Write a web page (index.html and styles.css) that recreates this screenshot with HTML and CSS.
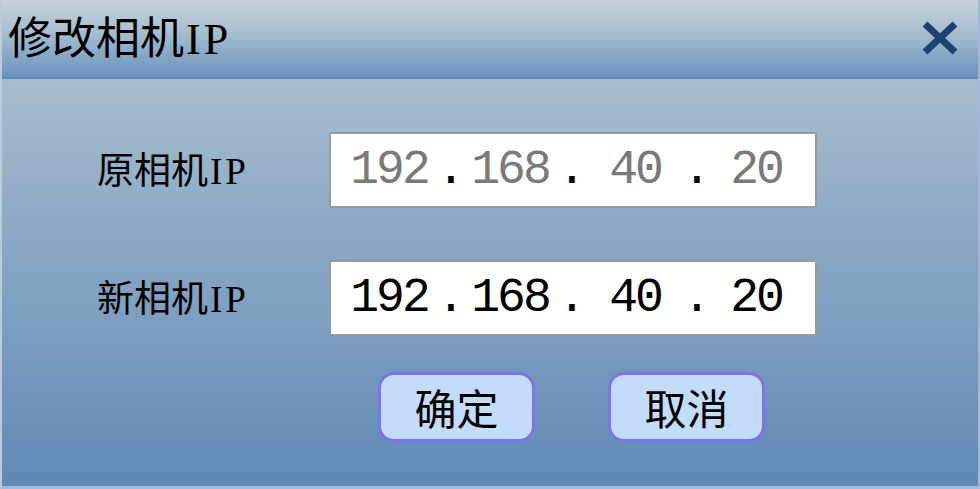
FILE: index.html
```html
<!DOCTYPE html>
<html lang="zh">
<head>
<meta charset="utf-8">
<title>修改相机IP</title>
<link rel="stylesheet" href="styles.css">
</head>
<body>
<div class="dialog">
  <div class="titlebar">
    <span class="title">修改相机<span class="latin">IP</span></span>
    <span class="close" aria-label="关闭">
      <svg width="40" height="36" viewBox="0 0 40 36">
        <path d="M5 4 L35 32 M35 4 L5 32" stroke="#1d436e" stroke-width="7" stroke-linecap="butt" fill="none"/>
      </svg>
    </span>
  </div>
  <div class="body">
    <div class="row">
      <span class="label">原相机<span class="latin">IP</span></span>
      <div class="ipbox disabled">
        <span class="oct">192</span><span class="dot">.</span><span class="oct">168</span><span class="dot">.</span><span class="oct">40</span><span class="dot">.</span><span class="oct">20</span>
      </div>
    </div>
    <div class="row">
      <span class="label">新相机<span class="latin">IP</span></span>
      <div class="ipbox">
        <span class="oct">192</span><span class="dot">.</span><span class="oct">168</span><span class="dot">.</span><span class="oct">40</span><span class="dot">.</span><span class="oct">20</span>
      </div>
    </div>
    <div class="buttons">
      <button class="btn">确定</button>
      <button class="btn">取消</button>
    </div>
  </div>
</div>
</body>
</html>
```

FILE: styles.css
```css
html, body {
  margin: 0;
  padding: 0;
  width: 980px;
  height: 489px;
  overflow: hidden;
}

body {
  font-family: "Noto Sans CJK SC", "Liberation Sans", sans-serif;
  color: #000;
}

.dialog {
  width: 980px;
  height: 489px;
  box-sizing: border-box;
  display: flex;
  flex-direction: column;
  border-left: 2px solid #b9ccd8;
  border-right: 2px solid #9fb9d6;
  border-bottom: 3px solid #a4bcd8;
  background: linear-gradient(to bottom, #b4c7d1 0%, #8eabc6 45%, #6189b6 100%);
}

.titlebar {
  height: 77px;
  flex: none;
  display: flex;
  align-items: center;
  justify-content: space-between;
  padding: 0 18px 0 6px;
  background: linear-gradient(to bottom, #c6d2d8 0%, #a9bfd0 40%, #6a92bd 100%);
  border-bottom: 2px solid #5f88b3;
}

.title {
  font-size: 44px;
  line-height: 1;
  margin-top: -2px;
}

.latin {
  font-family: "Liberation Serif", serif;
  letter-spacing: 3px;
  margin-left: 2px;
}

.close {
  display: flex;
  margin-top: -2px;
}

.body {
  flex: 1;
  display: flex;
  flex-direction: column;
  padding: 53px 0 0 95px;
}

.row {
  display: flex;
  align-items: center;
  margin-bottom: 52px;
}

.row + .row {
  margin-bottom: 36px;
}

.label {
  width: 232px;
  font-size: 37px;
  line-height: 1;
}

.ipbox {
  width: 488px;
  height: 76px;
  box-sizing: border-box;
  background: #fff;
  border: 2px solid #9a9a9a;
  border-radius: 2px;
  display: flex;
  align-items: center;
  padding-left: 19px;
  font-family: "Liberation Mono", "DejaVu Sans Mono", monospace;
  font-size: 48px;
  letter-spacing: -3px;
  color: #000;
}

.ipbox.disabled {
  color: #7a7a7a;
}

.oct {
  width: 78px;
  text-align: center;
}

.oct:nth-child(5) {
  margin-left: 4px;
}

.dot {
  width: 43px;
  text-align: center;
  color: #000;
}

.buttons {
  display: flex;
  gap: 73px;
  padding-left: 281px;
}

.btn {
  width: 157px;
  height: 70px;
  box-sizing: border-box;
  background: #c4dcfc;
  border: 3px solid #7a74ee;
  border-radius: 16px;
  font-family: "Noto Sans CJK SC", sans-serif;
  font-size: 42px;
  line-height: 1;
  color: #000;
  padding: 0;
}
```
